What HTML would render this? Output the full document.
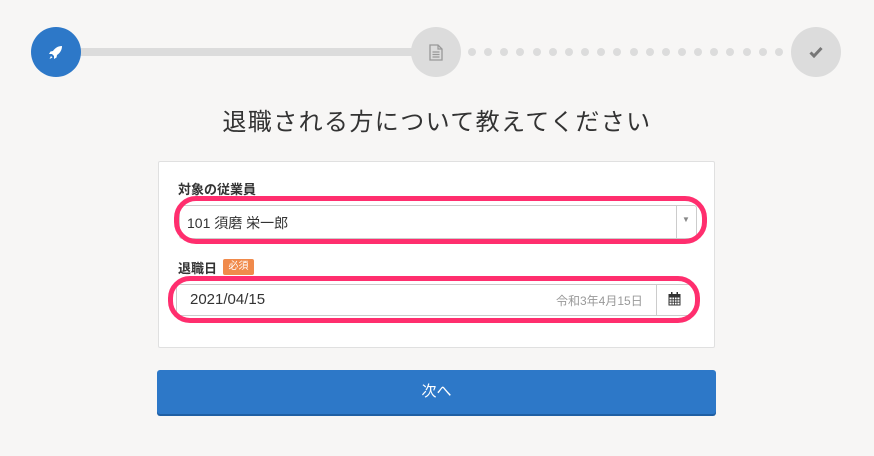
<!DOCTYPE html>
<html><head><meta charset="utf-8"><style>
*{box-sizing:border-box;margin:0;padding:0}
body{width:874px;height:456px;background:#f7f6f5;font-family:"Liberation Sans","Noto Sans CJK JP",sans-serif;position:relative;overflow:hidden;color:#333}
.a{position:absolute}
.circ{width:50px;height:50px;border-radius:50%;display:flex;align-items:center;justify-content:center}
.dot{width:8px;height:8px;border-radius:50%;background:#dcdcdc;top:48px}
</style></head><body>
<div class="a" style="left:78px;top:48px;width:336px;height:8px;background:#dcdcdc"></div>
<div class="a circ" style="left:31px;top:27px;background:#2d78c8">
<svg width="18" height="18" viewBox="0 0 18 18"><path d="M15 3C11 3 8 5 6 8L3.5 8.5 2 11h3l2 2v3l2.5-1.5L10 12c3-2 5-5 5-9zM4 13l-1.5 3 3-1.5z" fill="#fff"/></svg></div>
<div class="a circ" style="left:411px;top:27px;background:#dcdcdc">
<svg width="14" height="17" viewBox="0 0 14 17"><path d="M1 1h8l4 4v11H1z" fill="none" stroke="#999" stroke-width="1.3"/><path d="M9 1v4h4M3.5 8h7M3.5 10.5h7M3.5 13h7" stroke="#999" stroke-width="1.2" fill="none"/></svg></div>
<div class="a circ" style="left:791px;top:27px;background:#dcdcdc">
<svg width="14" height="12" viewBox="0 0 14 12"><path d="M1.5 6.5l3.5 3.5 7.5-8" fill="none" stroke="#777" stroke-width="3"/></svg></div>
<div id="dots"></div>
<script>
var h='';for(var i=0;i<20;i++){h+='<div class="a dot" style="left:'+(468+i*16.15)+'px"></div>'}document.getElementById('dots').innerHTML=h;
</script>
<div class="a" style="left:0;width:874px;top:102px;text-align:center;font-size:24px;letter-spacing:1.4px;color:#333">退職される方について教えてください</div>
<div class="a" style="left:158px;top:161px;width:557px;height:187px;background:#fff;border:1px solid #e0e0e0;border-radius:2px"></div>
<div class="a" style="left:178px;top:179px;font-size:13px;font-weight:bold;color:#333">対象の従業員</div>
<div class="a" style="left:179px;top:205px;width:518px;height:34px;border:1px solid #ccc;border-radius:3px;background:#fff"></div>
<div class="a" style="left:174px;top:196px;width:533px;height:48px;border:5px solid #ff2e6e;border-radius:22px"></div>
<div class="a" style="left:676px;top:205px;width:1px;height:34px;background:#ccc"></div>
<div class="a" style="left:187px;top:213px;font-size:14px;color:#333">101 須磨 栄一郎</div>
<div class="a" style="left:682px;top:215px;font-size:8px;color:#888">▼</div>
<div class="a" style="left:178px;top:258px;font-size:13px;font-weight:bold;color:#333">退職日</div>
<div class="a" style="left:223px;top:259px;width:31px;height:16px;background:#f08a4b;border-radius:2px;color:#fff;font-size:10px;text-align:center;line-height:16px">必須</div>
<div class="a" style="left:176px;top:284px;width:520px;height:32px;border:1px solid #ccc;border-radius:3px;background:#fff"></div>
<div class="a" style="left:168px;top:276px;width:532px;height:47px;border:5px solid #ff2e6e;border-radius:22px"></div>
<div class="a" style="left:656px;top:284px;width:1px;height:32px;background:#ccc"></div>
<div class="a" style="left:190px;top:291px;font-size:15px;color:#333">2021/04/15</div>
<div class="a" style="left:556px;top:292px;font-size:12px;color:#999">令和3年4月15日</div>
<svg class="a" style="left:668px;top:292px" width="13" height="14" viewBox="0 0 13 14"><rect x="0.5" y="2" width="12" height="11.5" fill="#333"/><rect x="3" y="0" width="1.5" height="3" fill="#333"/><rect x="8.5" y="0" width="1.5" height="3" fill="#333"/><path d="M1.5 5.5h10v7h-10z" fill="#fff"/><path d="M4 5.5v7M6.5 5.5v7M9 5.5v7M1.5 7.8h10M1.5 10.2h10" stroke="#333" stroke-width="0.8"/></svg>
<div class="a" style="left:157px;top:370px;width:559px;height:44px;background:#2d78c8;border-radius:3px;box-shadow:0 2px 0 #1f5fa3;color:#fff;font-size:15px;text-align:center;line-height:44px">次へ</div>
</body></html>
